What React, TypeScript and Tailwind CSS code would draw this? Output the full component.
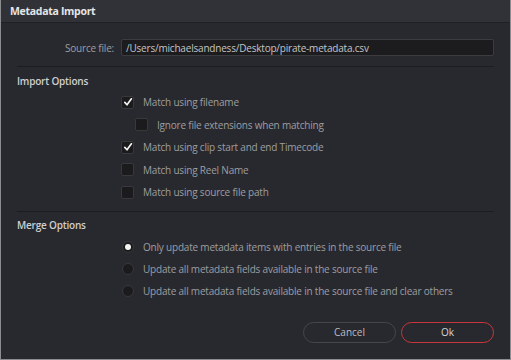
import { FC } from 'react'

const font = { fontFamily: '"Open Sans", "Noto Sans", sans-serif' }

const Check: FC<{ checked?: boolean }> = ({ checked }) => (
  <span className="flex h-[13px] w-[13px] shrink-0 items-center justify-center rounded-[2px] border border-[#38393d] bg-[#1b1b1d]">
    {checked && (
      <svg width="10" height="10" viewBox="0 0 10 10">
        <path d="M1.8 5.4 L4 7.8 L8.4 1.8" fill="none" stroke="#f2f2f2" strokeWidth="1.7" strokeLinecap="round" strokeLinejoin="round" />
      </svg>
    )}
  </span>
)

const Radio: FC<{ checked?: boolean }> = ({ checked }) => (
  <span className="flex h-[12px] w-[12px] shrink-0 items-center justify-center rounded-full border border-[#38393d] bg-[#1b1b1d]">
    {checked && <span className="h-[6px] w-[6px] rounded-full bg-[#f4f4f4]" />}
  </span>
)

const CheckRow: FC<{ label: string; checked?: boolean; indent?: boolean }> = ({ label, checked, indent }) => (
  <div className={`flex h-[22.5px] items-center gap-[9px] ${indent ? 'pl-[14px]' : ''}`}>
    <Check checked={checked} />
    <span className="text-[10px] leading-[14px] tracking-[-0.2px] text-[#9d9ea2]">{label}</span>
  </div>
)

const RadioRow: FC<{ label: string; checked?: boolean }> = ({ label, checked }) => (
  <div className="flex h-[22px] items-center gap-[9px] pl-[1px]">
    <Radio checked={checked} />
    <span className="text-[10px] leading-[14px] tracking-[-0.2px] text-[#9d9ea2]">{label}</span>
  </div>
)

const App: FC = () => {
  return (
    <div
      className="flex h-[360px] w-[511px] flex-col overflow-hidden border-x border-b border-[#8c8d90] bg-[#28292e]"
      style={font}
    >
      <div className="flex h-[23px] shrink-0 items-center border-b border-[#1f2024] bg-[#303237] pl-[9px]">
        <span className="text-[10.5px] font-bold leading-[14px] tracking-[-0.3px] text-[#e6e6e6]">Metadata Import</span>
      </div>

      <div className="flex flex-col px-[16px]">
        <div className="mt-[16px] flex items-center gap-[7px]">
          <span className="w-[97px] text-right text-[10px] leading-[14px] tracking-[-0.2px] text-[#9d9ea2]">Source file:</span>
          <div className="flex h-[17px] flex-1 items-center rounded-[2px] border border-[#3b3c40] bg-[#1c1c1e] px-[4px] text-[10px] leading-[14px] tracking-[-0.2px] text-[#c4c4c6]">
            /Users/michaelsandness/Desktop/pirate-metadata.csv
          </div>
        </div>

        <div className="mt-[10px] h-px bg-[#1c1d20]" />

        <div className="mt-[7px] h-[14px] text-[10px] font-semibold leading-[14px] tracking-[-0.2px] text-[#cfcfd1]">Import Options</div>

        <div className="mt-[3px] flex flex-col pl-[104px]">
          <CheckRow label="Match using filename" checked />
          <CheckRow label="Ignore file extensions when matching" indent />
          <CheckRow label="Match using clip start and end Timecode" checked />
          <CheckRow label="Match using Reel Name" />
          <CheckRow label="Match using source file path" />
        </div>

        <div className="mt-[7px] h-px bg-[#1c1d20]" />

        <div className="mt-[6px] h-[14px] text-[10px] font-semibold leading-[14px] tracking-[-0.2px] text-[#cfcfd1]">Merge Options</div>

        <div className="mt-[4px] flex flex-col pl-[104px]">
          <RadioRow label="Only update metadata items with entries in the source file" checked />
          <RadioRow label="Update all metadata fields available in the source file" />
          <RadioRow label="Update all metadata fields available in the source file and clear others" />
        </div>

        <div className="mt-[20px] flex justify-end gap-[5px]">
          <button className="h-[21px] w-[93px] rounded-full border border-[#46474b] text-[10px] leading-[14px] text-[#bdbdc0]">
            Cancel
          </button>
          <button className="h-[21px] w-[93px] rounded-full border border-[#c7373c] text-[10px] leading-[14px] text-[#d6d6d8]">
            Ok
          </button>
        </div>
      </div>
    </div>
  )
}

export default App
